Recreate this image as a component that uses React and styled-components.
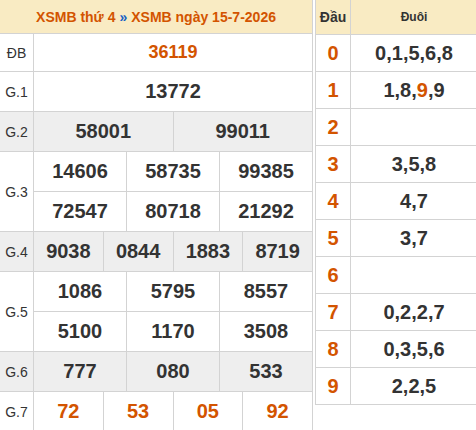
import React from "react";
import styled, { createGlobalStyle } from "styled-components";

const GlobalStyle = createGlobalStyle`
  html, body {
    margin: 0;
    padding: 0;
    overflow: hidden;
    background: #ffffff;
  }
  body {
    font-family: "Liberation Sans", Arial, sans-serif;
    color: #333333;
  }
`;

const LINE = "#d3d3d3";
const ORANGE = "#d35400";
const DARK = "#333333";
const YELLOW = "#f9ebc3";
const GREY = "#eeeeee";

const Page = styled.div`
  display: flex;
  align-items: flex-start;
  gap: 2px;
  width: 478px;
`;

const ResultTable = styled.div`
  flex: 0 0 313px;
  box-sizing: border-box;
  border-right: 1px solid ${LINE};
  display: flex;
  flex-direction: column;
`;

const TableHeader = styled.div`
  height: 33px;
  border-bottom: 1px solid ${LINE};
  background: ${YELLOW};
  display: flex;
  align-items: center;
  justify-content: center;
  font-size: 14px;
  font-weight: bold;
  color: ${ORANGE};
`;

const Arrow = styled.span`
  color: #1a62c4;
  margin: 0 4px;
`;

const PrizeRow = styled.div`
  display: flex;
  border-bottom: 1px solid ${LINE};
  background: ${(p) => (p.$grey ? GREY : "#ffffff")};
`;

const Label = styled.div`
  flex: 0 0 34px;
  box-sizing: border-box;
  border-right: 1px solid ${LINE};
  display: flex;
  align-items: center;
  justify-content: center;
  font-size: 14px;
  color: ${DARK};
`;

const Values = styled.div`
  flex: 1;
  display: flex;
  flex-direction: column;
`;

const SubRow = styled.div`
  display: flex;
  height: ${(p) => p.$h}px;
  & + & {
    border-top: 1px solid ${LINE};
  }
`;

const Num = styled.div`
  flex: 1 1 0;
  display: flex;
  align-items: center;
  justify-content: center;
  font-weight: bold;
  font-size: ${(p) => (p.$small ? 18 : 20)}px;
  color: ${(p) => (p.$orange ? ORANGE : DARK)};
  & + & {
    border-left: 1px solid ${LINE};
  }
`;

const TailTable = styled.div`
  flex: 0 0 163px;
  box-sizing: border-box;
  border-left: 1px solid ${LINE};
  border-right: 1px solid ${LINE};
  display: flex;
  flex-direction: column;
`;

const TailRow = styled.div`
  display: flex;
  height: ${(p) => p.$h}px;
  border-bottom: 1px solid ${LINE};
  background: ${(p) => (p.$head ? YELLOW : "#ffffff")};
`;

const HeadCell = styled.div`
  flex: ${(p) => (p.$first ? "0 0 35px" : "1")};
  box-sizing: border-box;
  border-right: ${(p) => (p.$first ? `1px solid ${LINE}` : "none")};
  display: flex;
  align-items: center;
  justify-content: center;
  font-weight: bold;
  font-size: ${(p) => p.$size}px;
  color: ${DARK};
`;

const HeadDigit = styled(HeadCell)`
  font-size: 20px;
  color: ${ORANGE};
`;

const TailCell = styled(HeadCell)`
  font-size: 20px;
`;

const Hot = styled.span`
  color: ${ORANGE};
`;

const prizes = [
  { label: "ĐB", rows: [["36119"]], h: 37, orange: true, small: true },
  { label: "G.1", rows: [["13772"]] },
  { label: "G.2", rows: [["58001", "99011"]], grey: true },
  { label: "G.3", rows: [["14606", "58735", "99385"], ["72547", "80718", "21292"]] },
  { label: "G.4", rows: [["9038", "0844", "1883", "8719"]], grey: true },
  { label: "G.5", rows: [["1086", "5795", "8557"], ["5100", "1170", "3508"]] },
  { label: "G.6", rows: [["777", "080", "533"]], grey: true },
  { label: "G.7", rows: [["72", "53", "05", "92"]], orange: true },
];

const tails = [
  ["0", "0,1,5,6,8"],
  ["1", null],
  ["2", ""],
  ["3", "3,5,8"],
  ["4", "4,7"],
  ["5", "3,7"],
  ["6", ""],
  ["7", "0,2,2,7"],
  ["8", "0,3,5,6"],
  ["9", "2,2,5"],
];

export default function App() {
  return (
    <>
      <GlobalStyle />
      <Page>
        <ResultTable>
          <TableHeader>
            XSMB thứ 4<Arrow>»</Arrow>XSMB ngày 15-7-2026
          </TableHeader>
          {prizes.map((p) => (
            <PrizeRow key={p.label} $grey={p.grey}>
              <Label>{p.label}</Label>
              <Values>
                {p.rows.map((r, i) => (
                  <SubRow key={i} $h={p.h || 39}>
                    {r.map((n) => (
                      <Num key={n} $orange={p.orange} $small={p.small}>
                        {n}
                      </Num>
                    ))}
                  </SubRow>
                ))}
              </Values>
            </PrizeRow>
          ))}
        </ResultTable>
        <TailTable>
          <TailRow $h={34} $head>
            <HeadCell $first $size={14}>Đầu</HeadCell>
            <HeadCell $size={12}>Đuôi</HeadCell>
          </TailRow>
          {tails.map(([d, v]) => (
            <TailRow key={d} $h={36}>
              <HeadDigit $first>{d}</HeadDigit>
              <TailCell>
                {v === null ? (
                  <>
                    1,8,<Hot>9</Hot>,9
                  </>
                ) : (
                  v
                )}
              </TailCell>
            </TailRow>
          ))}
        </TailTable>
      </Page>
    </>
  );
}
